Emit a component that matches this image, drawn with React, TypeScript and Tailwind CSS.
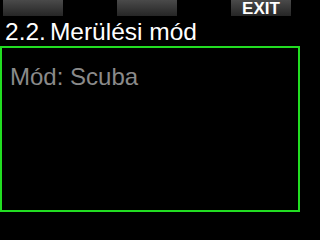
import { FC } from 'react';

const SoftKey: FC<{ label?: string }> = ({ label }) => (
  <div className="w-[60px] h-4 flex items-center justify-center bg-gradient-to-b from-[#4a4a4a] to-[#262626] text-white text-[17px] leading-none font-bold pt-[1px]">
    {label}
  </div>
);

export default function App() {
  return (
    <div
      className="w-[320px] h-[240px] bg-black overflow-hidden flex flex-col"
      style={{ fontFamily: '"Liberation Sans", Arial, sans-serif' }}
    >
      <div className="flex h-4 pl-[3px] gap-[54px]">
        <SoftKey />
        <SoftKey />
        <SoftKey label="EXIT" />
      </div>

      <div className="h-[30px] pl-[5px] pt-[2px] text-white text-[24.5px] leading-[28px] flex">
        <span>2.2.</span>
        <span className="ml-[4px]">Merülési mód</span>
      </div>

      <div className="w-[300px] h-[166px] border-2 border-[#22dd22] px-[8px] pt-[15px]">
        <p className="text-[#8a8a8a] text-[24px] leading-[28px]">Mód: Scuba</p>
      </div>
    </div>
  );
}
